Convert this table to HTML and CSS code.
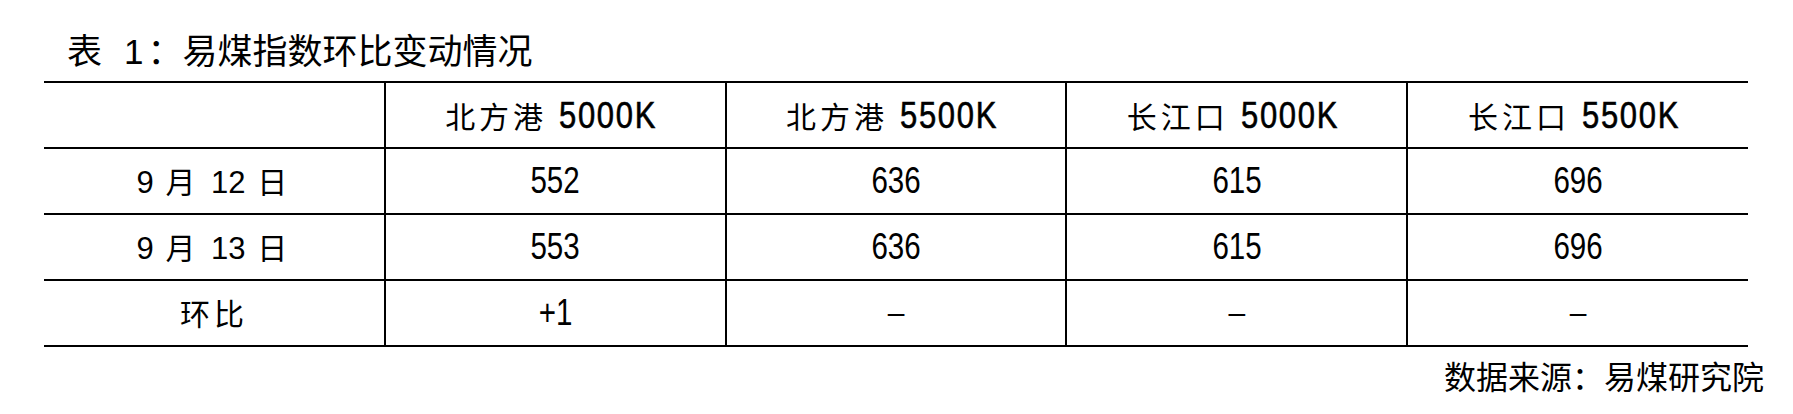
FILE: index.html
```html
<!DOCTYPE html>
<html lang="zh-CN">
<head>
<meta charset="utf-8">
<title>易煤指数环比变动情况</title>
<link rel="stylesheet" href="styles.css">
</head>
<body>
<div class="page">
  <div class="title">表<span class="num">1</span>：易煤指数环比变动情况</div>
  <table class="data">
    <thead>
      <tr>
        <th></th>
        <th><span class="kai">北方港</span> <span class="narrow">5000K</span></th>
        <th><span class="kai">北方港</span> <span class="narrow">5500K</span></th>
        <th><span class="kai">长江口</span> <span class="narrow">5000K</span></th>
        <th><span class="kai">长江口</span> <span class="narrow">5500K</span></th>
      </tr>
    </thead>
    <tbody>
      <tr>
        <td class="label">9 <span class="kai">月</span> 12 <span class="kai">日</span></td>
        <td><span class="narrow">552</span></td><td><span class="narrow">636</span></td><td><span class="narrow">615</span></td><td><span class="narrow">696</span></td>
      </tr>
      <tr>
        <td class="label">9 <span class="kai">月</span> 13 <span class="kai">日</span></td>
        <td><span class="narrow">553</span></td><td><span class="narrow">636</span></td><td><span class="narrow">615</span></td><td><span class="narrow">696</span></td>
      </tr>
      <tr>
        <td class="label"><span class="kai">环比</span></td>
        <td><span class="narrow">+1</span></td><td class="dash">–</td><td class="dash">–</td><td class="dash">–</td>
      </tr>
    </tbody>
  </table>
  <div class="source">数据来源：易煤研究院</div>
</div>
</body>
</html>
```
FILE: styles.css
```css
html, body {
  margin: 0;
  padding: 0;
  background: #ffffff;
  color: #000000;
}

.page {
  padding: 29px 45px 0 44px;
  font-family: "Noto Sans CJK SC", sans-serif;
}

.title {
  font-size: 35px;
  line-height: 40px;
  height: 40px;
  padding-left: 23px;
}

.title .num {
  font-family: "Liberation Sans", sans-serif;
  margin-left: 22px;
  margin-right: 4px;
}

.data {
  margin-top: 12px;
  width: 1704px;
  border-collapse: collapse;
  table-layout: fixed;
}

.data th,
.data td {
  height: 64px;
  padding: 0;
  text-align: center;
  vertical-align: middle;
  border-top: 2px solid #000;
  border-bottom: 2px solid #000;
  border-left: 2px solid #000;
  font-family: "Liberation Sans", "Noto Sans CJK SC", sans-serif;
  font-size: 36px;
  font-weight: normal;
  line-height: 40px;
}

.data th:first-child,
.data td:first-child {
  border-left: none;
}

.data .kai {
  font-family: "Noto Sans CJK SC", sans-serif;
  font-size: 30px;
  font-weight: 400;
  letter-spacing: 4px;
}

.data .narrow {
  display: inline-block;
  transform: scaleX(0.82);
}

.data th .narrow {
  letter-spacing: 2px;
  transform: scaleX(0.86);
  -webkit-text-stroke: 0.6px #000;
  margin-left: -6px;
}

.data td.label {
  font-family: "Liberation Sans", sans-serif;
  font-size: 31px;
  word-spacing: 3px;
}

.data td.dash {
  font-family: "Liberation Sans", sans-serif;
  font-size: 30px;
}

.source {
  margin-top: 8px;
  margin-right: -16px;
  text-align: right;
  font-size: 32px;
  line-height: 40px;
}
```
